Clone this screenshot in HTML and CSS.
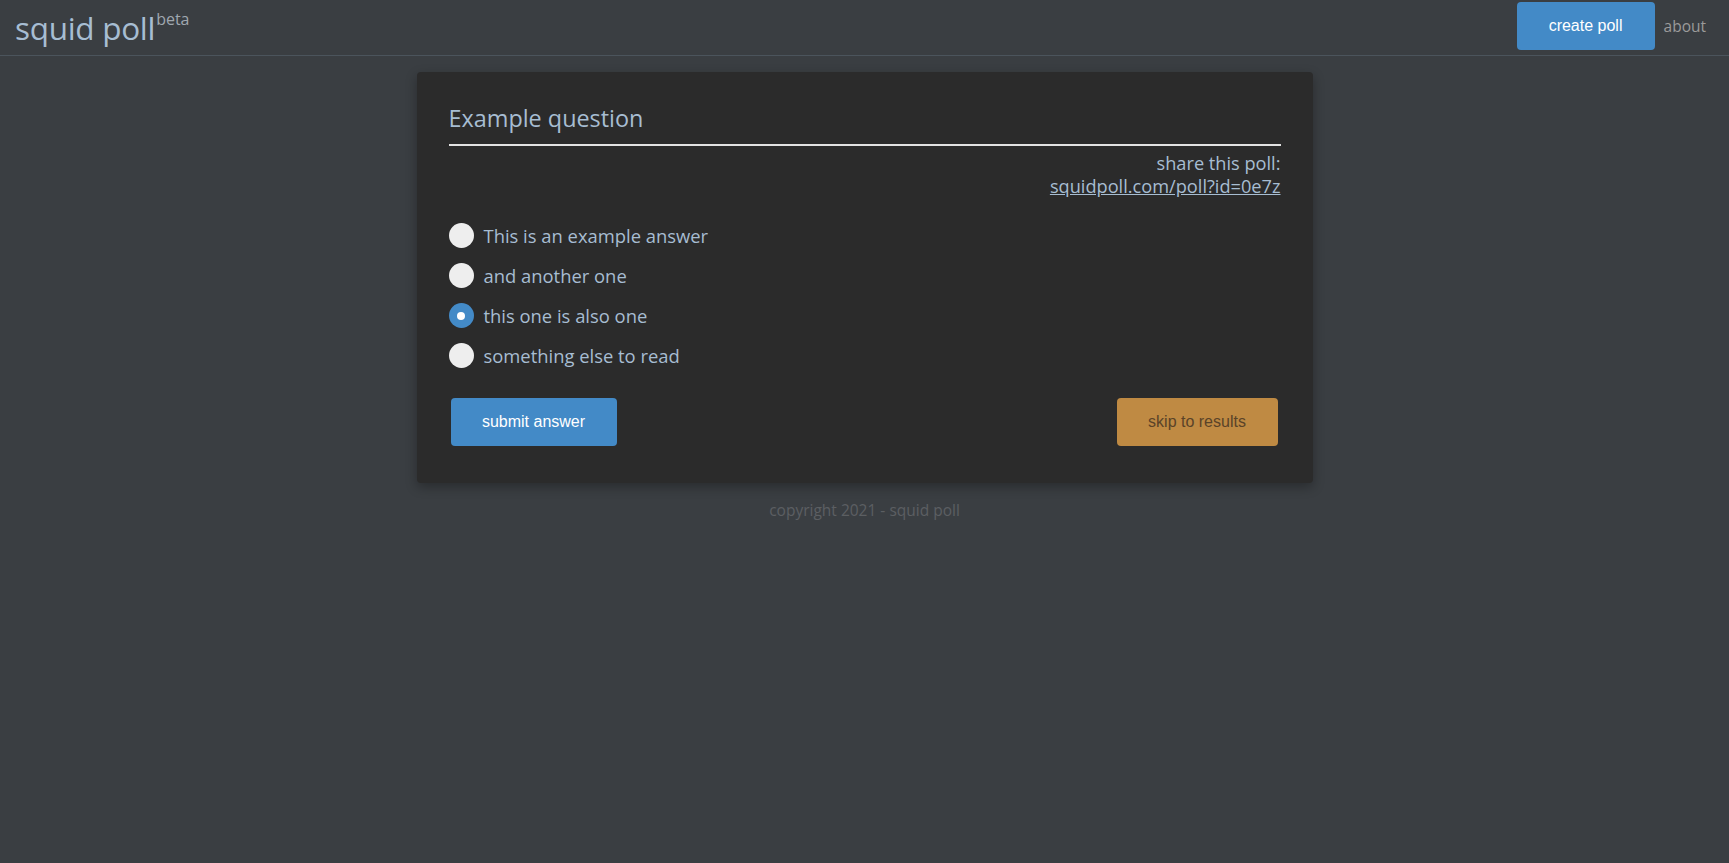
FILE: index.html
```html
<!DOCTYPE html>
<html lang="en">
<head>
<meta charset="utf-8">
<title>squid poll</title>
<link rel="stylesheet" href="styles.css">
</head>
<body>
<header class="topbar">
  <a class="brand" href="#">squid poll<sup class="beta">beta</sup></a>
  <nav class="nav">
    <button class="btn btn-blue nav-create">create poll</button>
    <a class="nav-link" href="#">about</a>
  </nav>
</header>
<main class="main">
  <section class="card">
    <h1 class="question">Example question</h1>
    <div class="share">
      <div>share this poll:</div>
      <a class="share-link" href="#">squidpoll.com/poll?id=0e7z</a>
    </div>
    <ul class="answers">
      <li class="answer"><span class="radio"></span><span>This is an example answer</span></li>
      <li class="answer"><span class="radio"></span><span>and another one</span></li>
      <li class="answer"><span class="radio checked"></span><span>this one is also one</span></li>
      <li class="answer"><span class="radio"></span><span>something else to read</span></li>
    </ul>
    <div class="actions">
      <button class="btn btn-blue btn-submit">submit answer</button>
      <button class="btn btn-gold btn-skip">skip to results</button>
    </div>
  </section>
  <footer class="footer">copyright 2021 - squid poll</footer>
</main>
</body>
</html>
```
FILE: styles.css
```css
* { box-sizing: border-box; }
html, body { margin: 0; padding: 0; }
body {
  background: #3a3e42;
  color: #a7bdd2;
  font-family: "Open Sans", "Noto Sans", sans-serif;
  min-height: 863px;
}
.topbar {
  height: 56px;
  border-bottom: 1px solid #4b545c;
  display: flex;
  align-items: flex-start;
  justify-content: space-between;
  padding: 0 23px 0 15px;
}
.brand {
  color: #a7bdd2;
  text-decoration: none;
  font-size: 31.5px;
  line-height: 31px;
  margin-top: 12px;
  letter-spacing: -0.3px;
}
.beta {
  font-size: 16px;
  color: #a0a8b0;
  vertical-align: top;
  position: relative;
  top: -8px;
  margin-left: 1px;
  letter-spacing: 0;
}
.nav {
  display: flex;
  align-items: center;
  gap: 9px;
  margin-top: 2px;
}
.btn {
  border: none;
  border-radius: 4px;
  font-family: "Liberation Sans", Arial, sans-serif;
  font-size: 16px;
  cursor: pointer;
}
.btn-blue { background: #438ac7; color: #ffffff; }
.btn-gold { background: #bf8a43; color: #5a4328; }
.nav-create { width: 138px; height: 48px; }
.nav-link {
  color: #9a9a9a;
  text-decoration: none;
  font-size: 15.5px;
}
.main {
  display: flex;
  flex-direction: column;
  align-items: center;
  padding-top: 16px;
}
.card {
  width: 896px;
  background: #2b2b2b;
  border-radius: 4px;
  box-shadow: 0 4px 12px rgba(0,0,0,0.3);
  padding: 30px 32px 37px;
}
.question {
  margin: 0;
  font-weight: normal;
  font-size: 23.4px;
  line-height: 32px;
  padding-bottom: 10px;
  border-bottom: 2px solid #e2e2e2;
  color: #a7bdd2;
}
.share {
  text-align: right;
  font-size: 18.2px;
  line-height: 23px;
  margin-top: 6px;
}
.share-link { color: #a7bdd2; }
.answers {
  list-style: none;
  margin: 25px 0 0;
  padding: 0;
  display: flex;
  flex-direction: column;
  gap: 15px;
}
.answer {
  display: flex;
  align-items: center;
  gap: 10px;
  font-size: 18.4px;
  line-height: 25px;
}
.radio {
  width: 25px;
  height: 25px;
  border-radius: 50%;
  background: #eeeeee;
  flex: none;
  display: flex;
  align-items: center;
  justify-content: center;
}
.radio.checked { background: #438ac7; }
.radio.checked::after {
  content: "";
  width: 8px;
  height: 8px;
  border-radius: 50%;
  background: #ffffff;
}
.actions {
  display: flex;
  justify-content: space-between;
  margin-top: 30px;
  padding: 0 3px 0 2px;
}
.btn-submit { width: 166px; height: 48px; }
.btn-skip { width: 161px; height: 48px; }
.footer {
  margin-top: 16px;
  color: #5c5f62;
  font-size: 15.5px;
}
```
